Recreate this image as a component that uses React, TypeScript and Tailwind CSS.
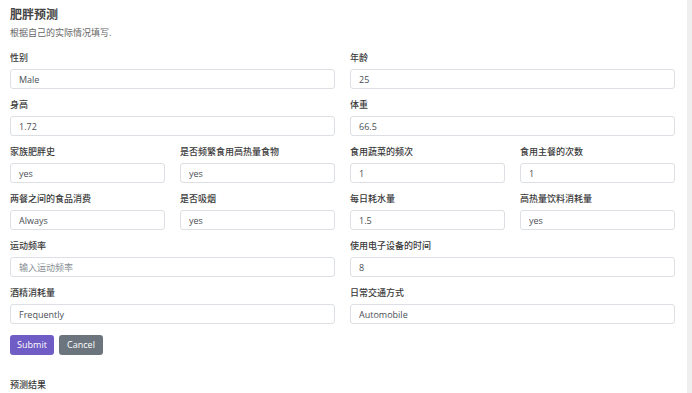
const fontStack = { fontFamily: '"Open Sans", "Noto Sans CJK SC", sans-serif' };

type Field = { label: string; value?: string; placeholder?: string; span: 'half' | 'quarter' };

const fields: Field[] = [
  { label: '性别', value: 'Male', span: 'half' },
  { label: '年龄', value: '25', span: 'half' },
  { label: '身高', value: '1.72', span: 'half' },
  { label: '体重', value: '66.5', span: 'half' },
  { label: '家族肥胖史', value: 'yes', span: 'quarter' },
  { label: '是否频繁食用高热量食物', value: 'yes', span: 'quarter' },
  { label: '食用蔬菜的频次', value: '1', span: 'quarter' },
  { label: '食用主餐的次数', value: '1', span: 'quarter' },
  { label: '两餐之间的食品消费', value: 'Always', span: 'quarter' },
  { label: '是否吸烟', value: 'yes', span: 'quarter' },
  { label: '每日耗水量', value: '1.5', span: 'quarter' },
  { label: '高热量饮料消耗量', value: 'yes', span: 'quarter' },
  { label: '运动频率', placeholder: '输入运动频率', span: 'half' },
  { label: '使用电子设备的时间', value: '8', span: 'half' },
  { label: '酒精消耗量', value: 'Frequently', span: 'half' },
  { label: '日常交通方式', value: 'Automobile', span: 'half' },
];

function FormField({ field }: { field: Field }) {
  return (
    <div className={field.span === 'half' ? 'col-span-2 mb-[10px]' : 'col-span-1 mb-[10px]'}>
      <label className="block text-[9px] leading-[12px] font-medium text-[#3a3a3a] mb-[5px]">{field.label}</label>
      <input
        type="text"
        defaultValue={field.value}
        placeholder={field.placeholder}
        className="block w-full h-[20px] px-[8px] text-[9px] text-[#4a4f55] placeholder:text-[#8a8f95] bg-white border border-[#dcdfe3] rounded-[3px] outline-none"
        style={fontStack}
      />
    </div>
  );
}

export default function App() {
  return (
    <div className="flex w-[692px] h-[393px] bg-white overflow-hidden" style={fontStack}>
      <div className="flex-1 pl-[10px] pt-[7px]">
        <div className="w-[665px]">
          <h1 className="text-[12px] leading-[16px] font-semibold text-[#444]">肥胖预测</h1>
          <p className="text-[9px] leading-[12px] text-[#666] mt-[4px] mb-[13px]">根据自己的实际情况填写.</p>
          <div className="grid grid-cols-4 gap-x-[15px]">
            {fields.map((f) => (
              <FormField key={f.label} field={f} />
            ))}
          </div>
          <div className="flex gap-[5px] mt-[1px]">
            <button className="h-[20px] w-[44px] rounded-[3px] bg-[#6f5cc4] text-white text-[9px]">Submit</button>
            <button className="h-[20px] w-[44px] rounded-[3px] bg-[#6c757d] text-white text-[9px]">Cancel</button>
          </div>
          <div className="mt-[24px] text-[9px] leading-[12px] font-medium text-[#3a3a3a]">预测结果</div>
        </div>
      </div>
      <div className="w-[5px] bg-[#efefef]" />
    </div>
  );
}
